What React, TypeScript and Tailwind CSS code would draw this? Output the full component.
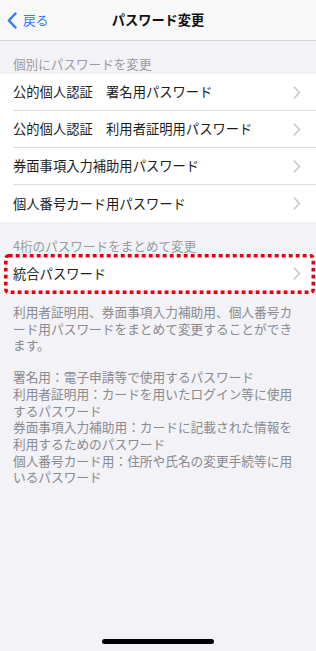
import React from "react";

const FONT = { fontFamily: '"Noto Sans CJK JP", "Noto Sans", sans-serif' };

function Chevron() {
  return (
    <svg width="8" height="13" viewBox="0 0 8 13" className="shrink-0">
      <path d="M1.2 1 L6.6 6.5 L1.2 12" fill="none" stroke="#c4c4c9" strokeWidth="1.4" strokeLinecap="round" strokeLinejoin="round" />
    </svg>
  );
}

function Row({ label, last }: { label: string; last?: boolean }) {
  return (
    <div className="h-[37px] bg-white pl-[13px]">
      <div className={`h-full flex items-center justify-between pr-[15px] ${last ? "" : "border-b border-[#dcdce0]"}`}>
        <span className="text-[13.3px] leading-none text-[#1c1c1e] whitespace-nowrap">{label}</span>
        <Chevron />
      </div>
    </div>
  );
}

const footer1 = [
  "利用者証明用、券面事項入力補助用、個人番号カ",
  "ード用パスワードをまとめて変更することができ",
  "ます。",
];

const footer2 = [
  "署名用：電子申請等で使用するパスワード",
  "利用者証明用：カードを用いたログイン等に使用",
  "するパスワード",
  "券面事項入力補助用：カードに記載された情報を",
  "利用するためのパスワード",
  "個人番号カード用：住所や氏名の変更手続等に用",
  "いるパスワード",
];

export default function App() {
  return (
    <div className="w-[316px] min-h-[651px] bg-[#f2f2f7] flex flex-col" style={FONT}>
      {/* Nav */}
      <div className="relative h-[41px] bg-[#f8f8f8] border-b border-[#d4d4d8] flex items-center justify-center">
        <div className="absolute left-[7px] top-0 h-full flex items-center gap-[6px] text-[#2f7bf5]">
          <svg width="10" height="17" viewBox="0 0 10 17">
            <path d="M8.5 1.5 L1.8 8.5 L8.5 15.5" fill="none" stroke="#2f7bf5" strokeWidth="2.4" strokeLinecap="round" strokeLinejoin="round" />
          </svg>
          <span className="text-[12.8px] leading-none">戻る</span>
        </div>
        <span className="text-[13.2px] font-bold leading-none text-[#111]">パスワード変更</span>
      </div>

      {/* Section 1 */}
      <div className="h-[33px] flex items-end pb-[3px] pl-[13px]">
        <span className="text-[12.6px] leading-[14px] text-[#9a9aa0]">個別にパスワードを変更</span>
      </div>
      <Row label="公的個人認証　署名用パスワード" />
      <Row label="公的個人認証　利用者証明用パスワード" />
      <Row label="券面事項入力補助用パスワード" />
      <Row label="個人番号カード用パスワード" last />

      {/* Section 2 */}
      <div className="h-[35px] flex items-end pb-[4px] pl-[13px]">
        <span className="text-[12.6px] leading-[14px] text-[#9a9aa0]">4桁のパスワードをまとめて変更</span>
      </div>
      <div className="relative h-[33px] bg-white pl-[13px] flex items-center justify-between pr-[15px]">
        <span className="text-[13.3px] leading-none text-[#1c1c1e]">統合パスワード</span>
        <Chevron />
        <svg className="absolute left-0 top-[-3px] pointer-events-none" width="316" height="42" viewBox="0 0 316 42">
          <rect x="5.8" y="1.8" width="307.5" height="36.5" rx="3" fill="none" stroke="#e5000f" strokeWidth="3.6" strokeDasharray="3.8 3.2" />
        </svg>
      </div>

      {/* Footer */}
      <div className="pt-[14px] pl-[13px] text-[12.7px] leading-[16.7px] text-[#8a8a8f]">
        {footer1.map((l) => (
          <div key={l} className="whitespace-nowrap">{l}</div>
        ))}
        <div className="mt-[15px]">
          {footer2.map((l) => (
            <div key={l} className="whitespace-nowrap">{l}</div>
          ))}
        </div>
      </div>

      {/* Home indicator */}
      <div className="mt-auto mb-[7px] mx-auto w-[112px] h-[5px] rounded-full bg-black" />
    </div>
  );
}
